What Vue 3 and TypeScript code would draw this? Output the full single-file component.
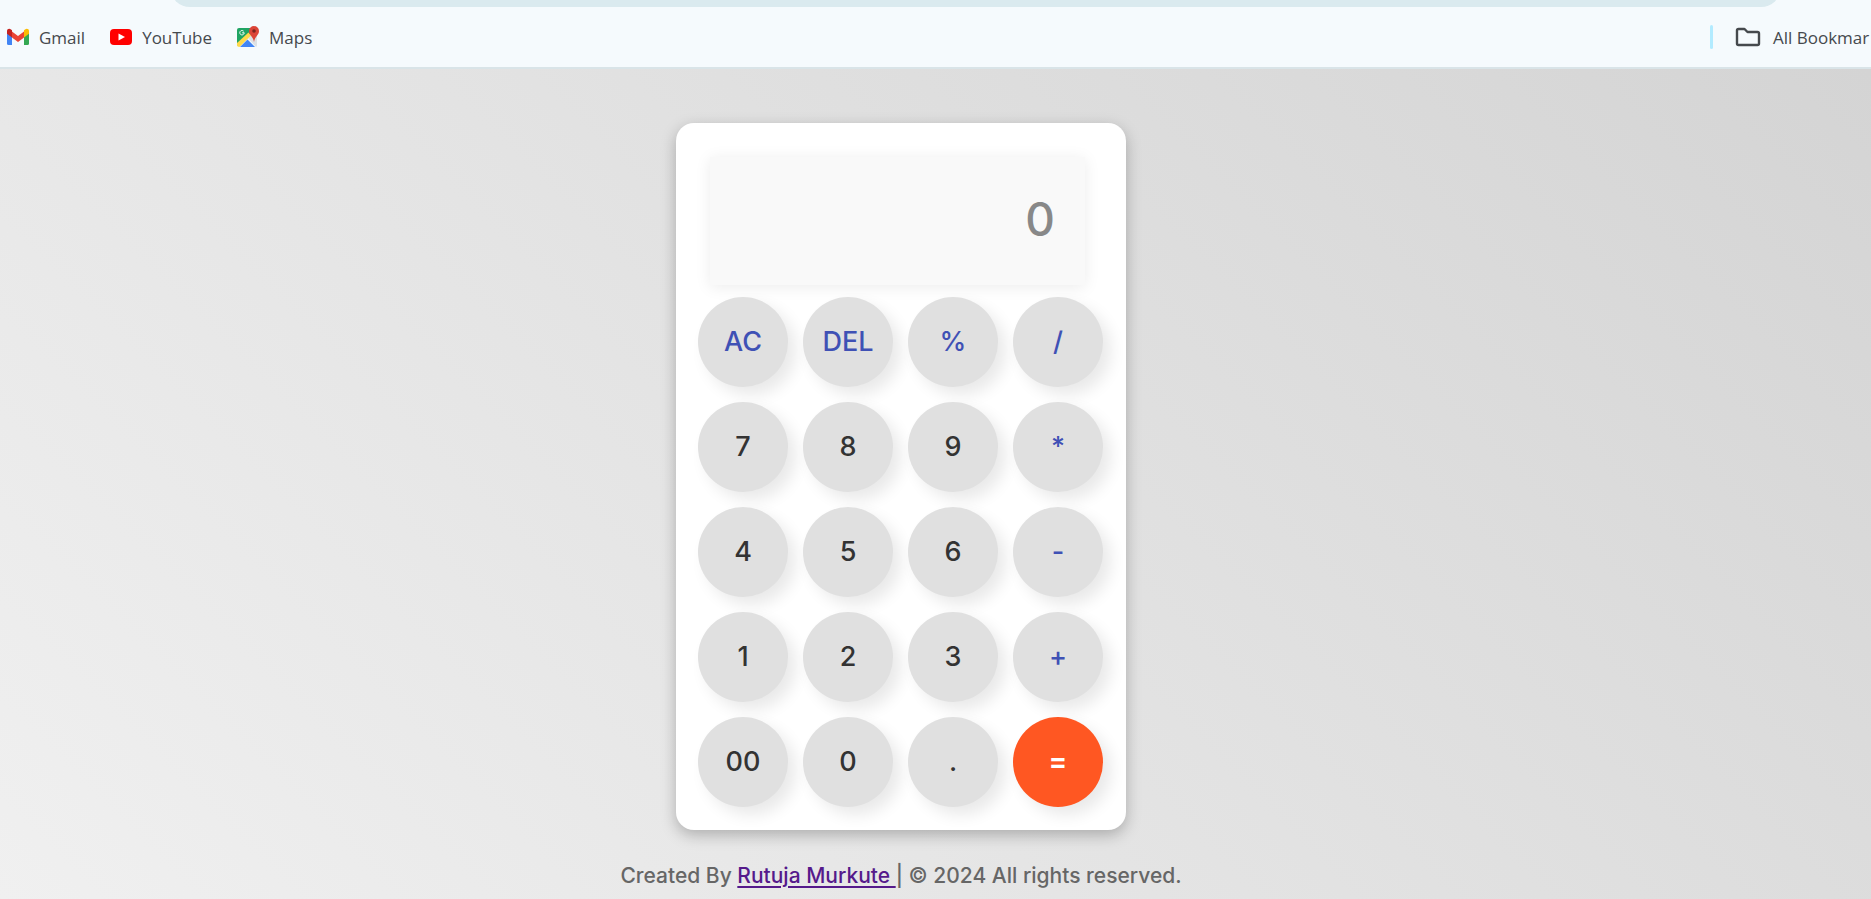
<script setup lang="ts">
import { ref } from 'vue'

type Kind = 'digit' | 'operator' | 'equals'
interface Key {
  label: string
  kind: Kind
}

const operators = ['AC', 'DEL', '%', '/', '*', '-', '+']
const labels = [
  'AC', 'DEL', '%', '/',
  '7', '8', '9', '*',
  '4', '5', '6', '-',
  '1', '2', '3', '+',
  '00', '0', '.', '=',
]
const keys: Key[] = labels.map((label) => ({
  label,
  kind: label === '=' ? 'equals' : operators.includes(label) ? 'operator' : 'digit',
}))

const expression = ref('')

function evaluate(source: string): string {
  const tokens = source.match(/\d*\.?\d+|[-+*/%]/g)
  if (!tokens) return ''
  const terms: number[] = [parseFloat(tokens[0])]
  for (let i = 1; i + 1 < tokens.length; i += 2) {
    const value = parseFloat(tokens[i + 1])
    const last = terms.length - 1
    if (tokens[i] === '+') terms.push(value)
    else if (tokens[i] === '-') terms.push(-value)
    else if (tokens[i] === '*') terms[last] *= value
    else if (tokens[i] === '/') terms[last] /= value
    else terms[last] %= value
  }
  const total = terms.reduce((sum, term) => sum + term, 0)
  return Number.isFinite(total) ? String(total) : 'Error'
}

function press(key: Key) {
  if (key.label === 'AC') expression.value = ''
  else if (key.label === 'DEL') expression.value = expression.value.slice(0, -1)
  else if (key.label === '=') expression.value = evaluate(expression.value)
  else expression.value += key.label
}
</script>

<template>
  <div class="screen">
    <header class="toolbar">
      <div class="address"></div>
      <nav class="bookmarks" aria-label="Bookmarks">
        <a class="bookmark" href="#gmail">
          <svg class="icon" viewBox="0 0 22 22" aria-hidden="true">
            <path d="M0 6v11.500a1.500 1.500 0 0 0 1.500 1.500H5V9z" fill="#4285f4" />
            <path d="M22 6v11.500a1.500 1.500 0 0 1-1.500 1.500H17V9z" fill="#34a853" />
            <path d="M5 5.500l6 4.500 6-4.500v6L11 16l-6-4.500z" fill="#ea4335" />
            <path d="M0 7V5.200C0 3 2.300 2.200 4 3.500l1 .8v7.200L0 7.700z" fill="#c5221f" />
            <path d="M22 7V5.200c0-2.200-2.300-3-4-1.700l-1 .8v7.200l5-3.800z" fill="#fbbc04" />
          </svg>
          <span>Gmail</span>
        </a>
        <a class="bookmark" href="#youtube">
          <svg class="icon" viewBox="0 0 22 22" aria-hidden="true">
            <rect y="3" width="22" height="16" rx="4" fill="#f00" />
            <path d="M8.500 7.500v7l6.500-3.500z" fill="#fff" />
          </svg>
          <span>YouTube</span>
        </a>
        <a class="bookmark" href="#maps">
          <svg class="icon" viewBox="0 0 22 22" aria-hidden="true">
            <path d="M2 2h13v5L2 20a2 2 0 0 1-2-2V4a2 2 0 0 1 2-2z" fill="#1fa463" />
            <path d="M13 9l7-1v11a2 2 0 0 1-1 2l-8-9z" fill="#dde1e4" />
            <path d="M0 17L11.500 6.500l2.500 3L2.500 21A2.500 2.500 0 0 1 0 18.500z" fill="#ffd94a" />
            <path d="M10.500 13.500L18 21H3z" fill="#4285f4" />
            <path d="M17 0a5 5 0 0 1 5 5c0 4-4.200 5.500-5 11-.8-5.500-5-7-5-11a5 5 0 0 1 5-5z" fill="#db4437" />
            <circle cx="17" cy="5" r="1.800" fill="#7b231e" />
            <path d="M6.600 5.200a2.200 2.200 0 1 0 .6 1.600H5.200" fill="none" stroke="#fff" stroke-width="1" />
          </svg>
          <span>Maps</span>
        </a>
      </nav>
      <a class="bookmark all" href="#bookmarks">
        <svg class="folder" viewBox="0 0 26 22" aria-hidden="true">
          <path d="M2 4.500Q2 3 3.500 3H9.500L12.500 6H22.500Q24 6 24 7.500V17.500Q24 19 22.500 19H3.500Q2 19 2 17.500z" fill="none" stroke="#45494d" stroke-width="2.400" stroke-linejoin="round" />
        </svg>
        <span>All Bookmar</span>
      </a>
    </header>

    <main class="page">
      <section class="calculator" aria-label="Calculator">
        <input v-model="expression" class="display" type="text" placeholder="0" aria-label="Result" readonly />
        <div class="keys">
          <button v-for="key in keys" :key="key.label" type="button" class="key" :class="key.kind" @click="press(key)">
            {{ key.label }}
          </button>
        </div>
      </section>
      <footer class="credit">
        Created By <a href="#author">Rutuja Murkute&nbsp;</a>| © 2024 All rights reserved.
      </footer>
    </main>
  </div>
</template>

<style>
html,
body {
  margin: 0;
  background: #e4e4e4;
}
</style>

<style scoped>
.screen {
  box-sizing: border-box;
  display: flex;
  flex-direction: column;
  min-height: 100vh;
  overflow: hidden;
  font-family: Inter, "Open Sans", sans-serif;
}

.toolbar {
  display: grid;
  grid-template-columns: 1fr 161px;
  grid-template-rows: 7px 60px;
  background: #f5fafd;
  border-bottom: 2px solid #d9e4e8;
  font-family: "Open Sans", "Noto Sans", sans-serif;
  font-size: 17px;
  overflow: hidden;
}

.address {
  grid-column: 1 / -1;
  align-self: end;
  height: 40px;
  margin: 0 90px 0 170px;
  border-radius: 20px;
  background: #daeaef;
}

.bookmarks {
  display: flex;
  align-items: center;
  gap: 25px;
  padding-left: 7px;
}

.bookmark {
  display: flex;
  align-items: center;
  gap: 10px;
  color: #45494d;
  text-decoration: none;
  white-space: nowrap;
}

.icon {
  flex: none;
  width: 22px;
  height: 22px;
}

.folder {
  flex: none;
  width: 26px;
  height: 22px;
}

.all {
  gap: 12px;
}

.all::before {
  content: "";
  flex: none;
  width: 3px;
  height: 24px;
  margin-right: 10px;
  border-radius: 2px;
  background: #b2ebff;
}

.page {
  flex: 1;
  display: flex;
  flex-direction: column;
  align-items: center;
  padding: 54px 69px 0 0;
  background: linear-gradient(45deg, #f0f0f0, #d4d4d4);
}

.calculator {
  box-sizing: border-box;
  width: 450px;
  padding: 34px 22px 23px;
  border-radius: 18px;
  background: #fff;
  box-shadow: 0 5px 15px rgba(0, 0, 0, 0.25);
}

.display {
  display: block;
  box-sizing: border-box;
  width: 375px;
  height: 128px;
  margin: 0 0 12px 12px;
  padding: 0 30px 4px;
  border: 0;
  outline: 0;
  background: #f9f9f9;
  box-shadow: 0 2px 15px rgba(0, 0, 0, 0.08);
  color: #333;
  font-family: inherit;
  font-size: 46px;
  font-weight: 500;
  text-align: right;
}

.display::placeholder {
  color: #888;
  opacity: 1;
}

.keys {
  display: grid;
  grid-template-columns: repeat(4, 90px);
  gap: 15px;
}

.key {
  height: 90px;
  padding: 0 0 2px;
  border: 0;
  border-radius: 50%;
  background: #e0e0e0;
  box-shadow: 8px 8px 16px rgba(0, 0, 0, 0.09);
  color: #333;
  font-family: inherit;
  font-size: 27px;
  font-weight: 500;
  cursor: pointer;
}

.operator {
  color: #3f51b5;
}

.equals {
  background: #ff5722;
  color: #fff;
  font-weight: 700;
}

.credit {
  margin-top: 31px;
  color: #666;
  font-size: 21px;
  font-weight: 500;
  line-height: 30px;
  white-space: nowrap;
}

.credit a {
  color: #551a8b;
  text-decoration-thickness: 2px;
  text-underline-offset: 3px;
}
</style>
